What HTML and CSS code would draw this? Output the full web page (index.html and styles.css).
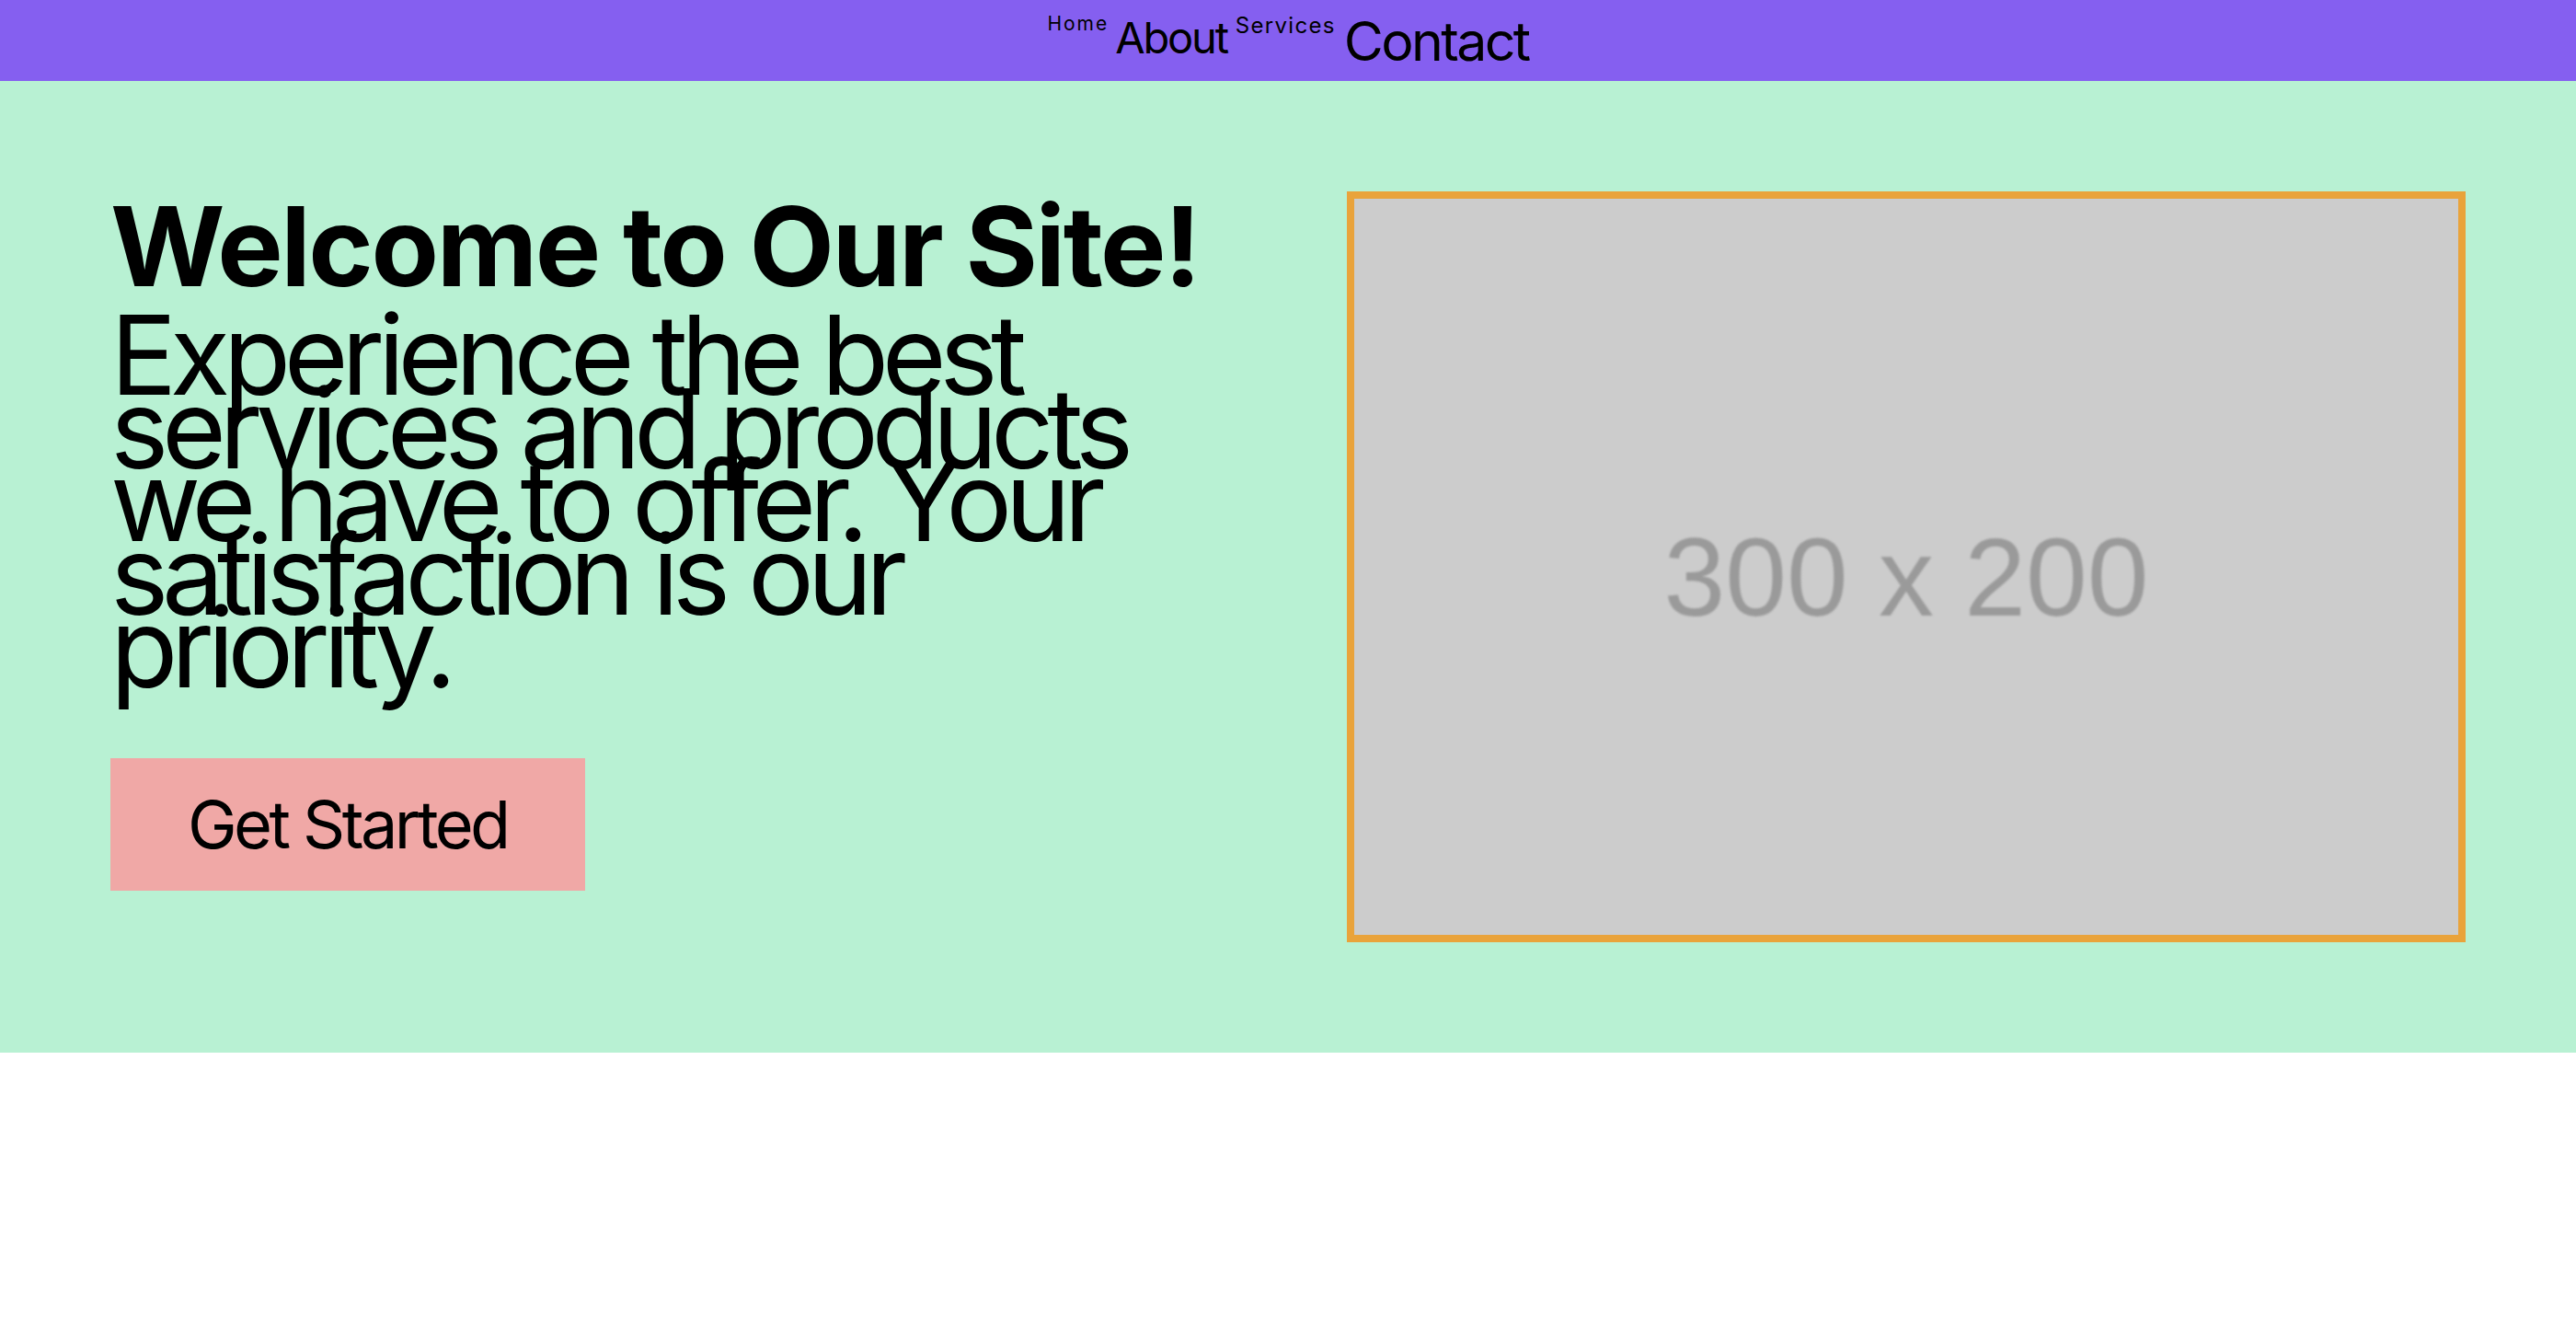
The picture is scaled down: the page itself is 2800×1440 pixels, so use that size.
FILE: index.html
```html
<!DOCTYPE html>
<html lang="en">
<head>
<meta charset="utf-8">
<title>Welcome to Our Site!</title>
<link rel="stylesheet" href="styles.css">
</head>
<body>
  <nav class="topnav">
    <a class="nav-link nav-home" href="#">Home</a>
    <a class="nav-link nav-about" href="#">About</a>
    <a class="nav-link nav-services" href="#">Services</a>
    <a class="nav-link nav-contact" href="#">Contact</a>
  </nav>
  <section class="hero">
    <div class="hero-text">
      <h1 class="hero-title">Welcome to Our Site!</h1>
      <p class="hero-lead">Experience the best services and products we have to offer. Your satisfaction is our priority.</p>
      <a class="hero-button" href="#">Get Started</a>
    </div>
    <div class="hero-media">
      <div class="placeholder"><span class="placeholder-label">300 x 200</span></div>
    </div>
  </section>
</body>
</html>
```
FILE: styles.css
```css
* { box-sizing: border-box; }
html, body { margin: 0; padding: 0; }
body {
  font-family: "Inter", "Noto Sans", sans-serif;
  color: #000;
  background: #fff;
}
.topnav {
  display: flex;
  justify-content: center;
  align-items: flex-start;
  gap: 9px;
  padding: 15px 0;
  height: 88px;
  background: #855ff0;
}
.nav-link {
  color: #000;
  text-decoration: none;
  line-height: 1;
}
.nav-home { font-size: 21px; letter-spacing: 2px; margin-right: -2px; }
.nav-about { font-size: 47px; margin-top: 2px; letter-spacing: -2.2px; }
.nav-services { font-size: 24px; margin-top: 1px; letter-spacing: 1.3px; }
.nav-contact { font-size: 59px; letter-spacing: -2.6px; }

.hero {
  display: grid;
  grid-template-columns: 1fr 1fr;
  gap: 128px;
  align-items: start;
  padding: 120px;
  background: #b8f1d3;
}
.hero-text {
  display: flex;
  flex-direction: column;
  align-items: flex-start;
}
.hero-title {
  margin: 0;
  font-size: 120px;
  font-weight: 700;
  line-height: 1;
  letter-spacing: -0.02em;
  white-space: nowrap;
}
.hero-lead {
  margin: 18px 0 80px;
  font-size: 120px;
  font-weight: 400;
  line-height: 79.5px;
  letter-spacing: -0.062em;
}
.hero-button {
  display: inline-block;
  padding: 28px 84px;
  background: #f0a8a6;
  color: #000;
  text-decoration: none;
  font-size: 72px;
  line-height: 88px;
  letter-spacing: -0.05em;
}
.hero-media {
  border: 8px solid #e9a33b;
}
.placeholder {
  aspect-ratio: 3 / 2;
  background: #cccccc;
  display: flex;
  align-items: center;
  justify-content: center;
  padding-top: 22px;
}
.placeholder-label {
  font-family: "Liberation Sans", Arial, sans-serif;
  font-size: 120px;
  color: #9a9a9a;
  filter: blur(1px);
}
```
